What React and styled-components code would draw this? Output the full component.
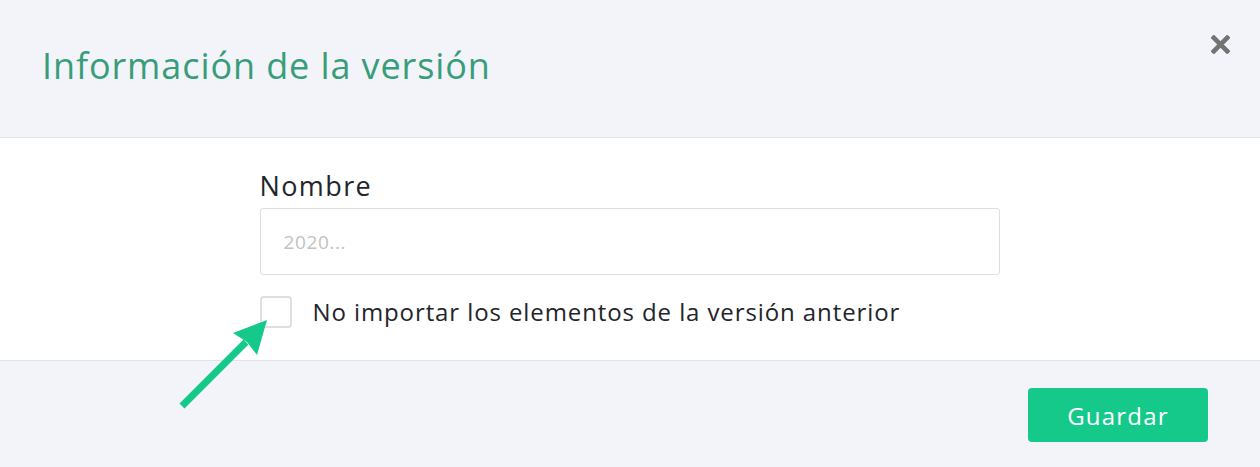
import styled, { createGlobalStyle } from "styled-components";

const GlobalStyle = createGlobalStyle`
  html, body {
    margin: 0;
    padding: 0;
    background: #ffffff;
    font-family: "Open Sans", "Noto Sans", sans-serif;
  }
  * { box-sizing: border-box; }
`;

export default function App() {
  return (
    <>
      <GlobalStyle />
      <Modal>
        <Header>
          <Title>Información de la versión</Title>
          <CloseButton aria-label="Cerrar">
            <svg width="19" height="19" viewBox="0 0 20 20">
              <path
                d="M3 3 L17 17 M17 3 L3 17"
                stroke="#737373"
                strokeWidth="5"
                strokeLinecap="square"
              />
            </svg>
          </CloseButton>
        </Header>
        <Body>
          <Form>
            <Label htmlFor="nombre">Nombre</Label>
            <Input id="nombre" placeholder="2020..." />
            <CheckRow>
              <Checkbox type="checkbox" />
              <CheckText>No importar los elementos de la versión anterior</CheckText>
            </CheckRow>
          </Form>
        </Body>
        <Footer>
          <SaveButton>Guardar</SaveButton>
        </Footer>
        <Arrow width="110" height="110" viewBox="0 0 110 110">
          <path d="M12 96 L76 32" stroke="#15c98b" strokeWidth="7" fill="none" />
          <path d="M97 10 L63 23 L77 32 L87 45 Z" fill="#15c98b" />
        </Arrow>
      </Modal>
    </>
  );
}

const Modal = styled.div`
  position: relative;
  width: 1260px;
  height: 467px;
  display: flex;
  flex-direction: column;
  background: #f2f4f9;
`;

const Header = styled.div`
  height: 138px;
  display: flex;
  align-items: center;
  justify-content: space-between;
  padding: 0 30px 0 42px;
  border-bottom: 1px solid #e1e3e8;
`;

const Title = styled.h1`
  margin: 0 0 6px;
  font-size: 36px;
  font-weight: 500;
  letter-spacing: 0.9px;
  color: #389d79;
`;

const CloseButton = styled.button`
  align-self: flex-start;
  margin-top: 35px;
  background: none;
  border: none;
  padding: 0;
  cursor: pointer;
`;

const Body = styled.div`
  height: 223px;
  background: #ffffff;
  border-bottom: 1px solid #e1e3e8;
  display: flex;
  justify-content: center;
`;

const Form = styled.div`
  width: 740px;
  margin-left: -1px;
  padding-top: 31px;
  display: flex;
  flex-direction: column;
`;

const Label = styled.label`
  font-size: 27px;
  letter-spacing: 1.4px;
  color: #23252a;
  line-height: 34px;
  margin-bottom: 5px;
`;

const Input = styled.input`
  height: 67px;
  border: 1px solid #dcdee3;
  border-radius: 3px;
  padding: 0 23px;
  font-family: inherit;
  font-size: 19px;
  letter-spacing: 0.6px;
  color: #333;
  outline: none;
  &::placeholder {
    color: #c2c2c2;
  }
`;

const CheckRow = styled.label`
  display: flex;
  align-items: center;
  gap: 21px;
  margin-top: 20px;
`;

const Checkbox = styled.input`
  appearance: none;
  margin: 0;
  width: 32px;
  height: 32px;
  border: 2px solid #dcdfe4;
  border-radius: 4px;
  background: #fff;
`;

const CheckText = styled.span`
  font-size: 24px;
  letter-spacing: 0.9px;
  color: #23252a;
`;

const Footer = styled.div`
  flex: 1;
  display: flex;
  justify-content: flex-end;
  align-items: flex-start;
  padding: 27px 52px 0 0;
`;

const SaveButton = styled.button`
  width: 180px;
  height: 54px;
  background: #15c98b;
  color: #ffffff;
  border: none;
  border-radius: 4px;
  font-family: inherit;
  font-size: 24px;
  font-weight: 500;
  letter-spacing: 1.2px;
  cursor: pointer;
`;

const Arrow = styled.svg`
  position: absolute;
  left: 170px;
  top: 310px;
`;
